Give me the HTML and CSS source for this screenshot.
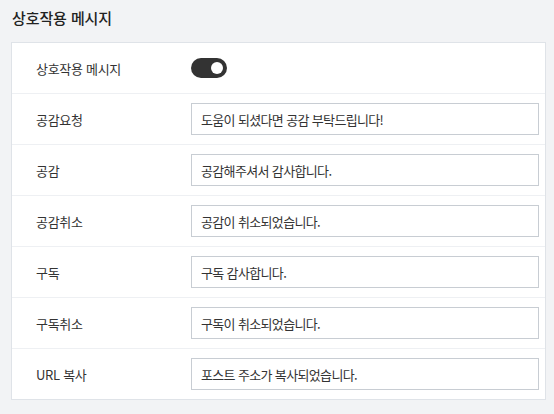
FILE: index.html
```html
<!DOCTYPE html>
<html lang="ko">
<head>
<meta charset="utf-8">
<link rel="stylesheet" href="styles.css">
</head>
<body>
<div class="page">
  <h2 class="title">상호작용 메시지</h2>
  <div class="card">
    <div class="row">
      <div class="label">상호작용 메시지</div>
      <div class="field"><span class="toggle"><span class="knob"></span></span></div>
    </div>
    <div class="row">
      <div class="label">공감요청</div>
      <div class="field"><input class="input" type="text" value="도움이 되셨다면 공감 부탁드립니다!"></div>
    </div>
    <div class="row">
      <div class="label">공감</div>
      <div class="field"><input class="input" type="text" value="공감해주셔서 감사합니다."></div>
    </div>
    <div class="row">
      <div class="label">공감취소</div>
      <div class="field"><input class="input" type="text" value="공감이 취소되었습니다."></div>
    </div>
    <div class="row">
      <div class="label">구독</div>
      <div class="field"><input class="input" type="text" value="구독 감사합니다."></div>
    </div>
    <div class="row">
      <div class="label">구독취소</div>
      <div class="field"><input class="input" type="text" value="구독이 취소되었습니다."></div>
    </div>
    <div class="row">
      <div class="label">URL 복사</div>
      <div class="field"><input class="input" type="text" value="포스트 주소가 복사되었습니다."></div>
    </div>
  </div>
</div>
</body>
</html>
```
FILE: styles.css
```css
* { box-sizing: border-box; }
html, body {
  margin: 0;
  padding: 0;
  background: #f2f3f5;
  font-family: "Noto Sans CJK KR", "Noto Sans", sans-serif;
  color: #333;
}
.page {
  padding: 0 8px 0 11px;
}
.title {
  margin: 0 0 12px 1px;
  padding-top: 6px;
  font-size: 15px;
  line-height: 24px;
  font-weight: 500;
  letter-spacing: -0.1px;
  color: #222;
}
.card {
  background: #fff;
  border: 1px solid #dfe3e8;
}
.row {
  display: flex;
  align-items: center;
  height: 51px;
  padding: 0 6px 0 24px;
  border-bottom: 1px solid #eef0f3;
}
.row:last-child {
  border-bottom: none;
  height: 50px;
}
.label {
  width: 155px;
  flex: none;
  font-size: 13px;
  letter-spacing: -0.3px;
  color: #333;
}
.field {
  flex: 1;
  display: flex;
  align-items: center;
}
.toggle {
  position: relative;
  display: block;
  width: 36px;
  height: 20px;
  border-radius: 10px;
  background: #333;
}
.knob {
  position: absolute;
  right: 4px;
  top: 4px;
  width: 12px;
  height: 12px;
  border-radius: 50%;
  background: #fff;
}
.input {
  width: 100%;
  height: 32px;
  margin: 0;
  padding: 0 9px;
  border: 1px solid #c8cdd3;
  border-radius: 0;
  background: #fff;
  font-family: "Noto Sans CJK KR", "Noto Sans", sans-serif;
  font-size: 13px;
  letter-spacing: -0.65px;
  color: #333;
  outline: none;
}
```
